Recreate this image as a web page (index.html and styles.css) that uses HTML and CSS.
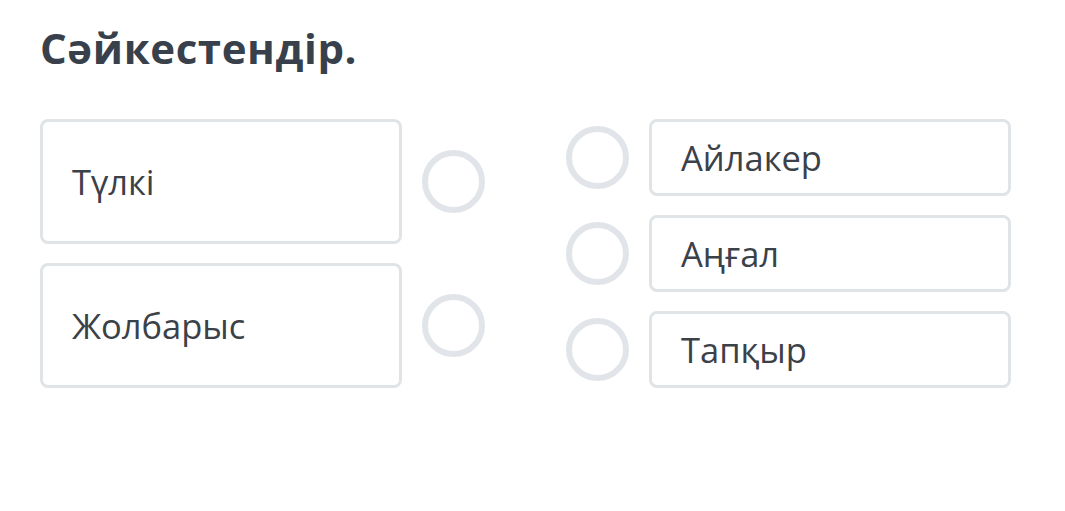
FILE: index.html
```html
<!DOCTYPE html>
<html>
<head>
<meta charset="utf-8">
<link rel="stylesheet" href="styles.css">
</head>
<body>
<div class="page">
  <h1 class="title">Сәйкестендір.</h1>
  <div class="match">
    <div class="col-left">
      <div class="row-left">
        <div class="box box-tall"><span class="label">Түлкі</span></div>
        <div class="dot"></div>
      </div>
      <div class="row-left">
        <div class="box box-tall"><span class="label">Жолбарыс</span></div>
        <div class="dot"></div>
      </div>
    </div>
    <div class="col-right">
      <div class="row-right">
        <div class="dot"></div>
        <div class="box box-short"><span class="label">Айлакер</span></div>
      </div>
      <div class="row-right">
        <div class="dot"></div>
        <div class="box box-short"><span class="label">Аңғал</span></div>
      </div>
      <div class="row-right">
        <div class="dot"></div>
        <div class="box box-short"><span class="label">Тапқыр</span></div>
      </div>
    </div>
  </div>
</div>
</body>
</html>
```
FILE: styles.css
```css
* { box-sizing: border-box; }
html, body { margin: 0; padding: 0; background: #ffffff; }
body { font-family: "Open Sans", "Noto Sans", sans-serif; color: #3b4149; }
.page { padding: 21px 0 0 40px; width: 1065px; height: 511px; }
.title {
  margin: 0;
  font-size: 42px;
  font-weight: 700;
  line-height: 54px;
  color: #38414b;
  letter-spacing: 0.6px;
}
.match {
  display: flex;
  gap: 81px;
  margin-top: 44px;
}
.col-left, .col-right { display: flex; flex-direction: column; gap: 19px; }
.row-left, .row-right { display: flex; align-items: center; gap: 20px; }
.box {
  width: 362px;
  border: 3px solid #e0e4e7;
  border-radius: 8px;
  display: flex;
  align-items: center;
  background: #fff;
}
.box-tall { height: 125px; padding-left: 29px; }
.box-short { height: 77px; padding-left: 29px; }
.label { font-size: 34.5px; line-height: 40px; color: #3b4149; }
.dot {
  width: 63px;
  height: 63px;
  border: 6px solid #e1e5e9;
  border-radius: 50%;
  flex: none;
}
```
